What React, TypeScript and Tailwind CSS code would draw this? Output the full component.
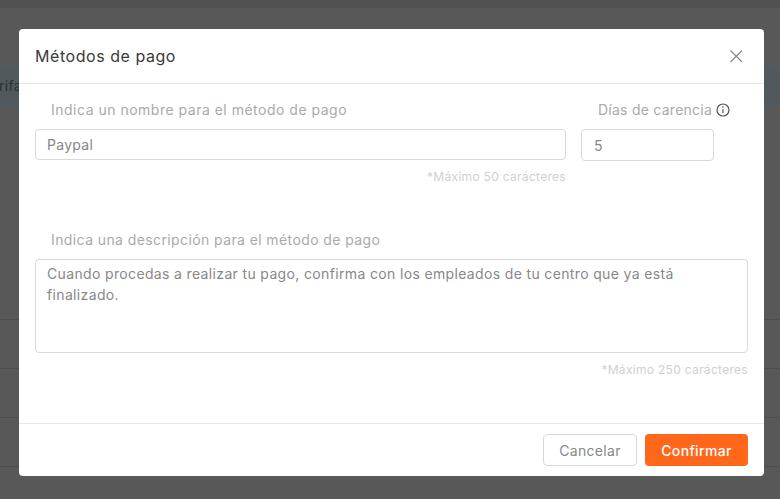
export default function App() {
  const font = { fontFamily: "Inter, 'Noto Sans', sans-serif" };
  return (
    <div className="relative h-[499px] w-[780px] overflow-hidden bg-[#585858]" style={font}>
      <div className="h-[8px] bg-[#515151]" />
      <div className="h-[58px]" />
      <div className="flex h-[39px] items-center border-y border-[#46606f] bg-[#52595d] text-[14px] tracking-[0.3px] text-[#2b3236]">
        <span className="-ml-[1px]">rifa</span>
      </div>
      <div className="h-[214px]" />
      <div className="h-[49px] border-t border-[#4e4e4e]" />
      <div className="h-[49px] border-t border-[#4e4e4e]" />
      <div className="h-[49px] border-t border-[#4e4e4e]" />
      <div className="h-[33px] border-t border-[#4e4e4e]" />
      <div className="absolute top-[29px] left-[19px] flex h-[447px] w-[745px] flex-col rounded-[4px] bg-white">
        <div className="flex h-[55px] items-center justify-between border-b border-[#e6e6e6] pr-[20px] pl-[16px]">
          <h2 className="text-[16px] font-normal tracking-[0.55px] text-[#3a3a3a]">Métodos de pago</h2>
          <svg width="16" height="16" viewBox="0 0 16 16" fill="none" stroke="#888" strokeWidth="1.2">
            <path d="M2.5 2.5 L14 14 M14 2.5 L2.5 14" />
          </svg>
        </div>
        <div className="flex flex-1 flex-col px-[16px]">
          <div className="flex gap-[15px]">
            <div className="w-[531px]">
              <label className="block pt-[17px] pl-[16px] text-[14px] leading-[18px] tracking-[0.5px] text-[#aaa]">Indica un nombre para el método de pago</label>
              <div className="mt-[10px] flex h-[31px] items-center rounded-[4px] border border-[#d9d9d9] px-[11px] pb-[1px] text-[14px] tracking-[0.3px] text-[#888]">Paypal</div>
              <p className="mt-[9px] text-right text-[12px] leading-[15px] tracking-[0.3px] text-[#d0d0d0]">*Máximo 50 carácteres</p>
            </div>
            <div>
              <label className="flex items-center gap-[4px] pt-[17px] pl-[17px] text-[14px] leading-[18px] tracking-[0.25px] whitespace-nowrap text-[#aaa]">
                Días de carencia
                <svg width="14" height="14" viewBox="0 0 14 14" fill="none" stroke="#555" strokeWidth="1.2">
                  <circle cx="7" cy="7" r="6" />
                  <path d="M7 6.2 V10.2" />
                  <circle cx="7" cy="4.1" r="0.8" fill="#555" stroke="none" />
                </svg>
              </label>
              <div className="mt-[10px] flex h-[32px] w-[133px] items-center rounded-[4px] border border-[#d9d9d9] px-[12px] text-[14px] text-[#888]">5</div>
            </div>
          </div>
          <label className="mt-[47px] block pl-[16px] text-[14px] leading-[18px] tracking-[0.4px] text-[#aaa]">Indica una descripción para el método de pago</label>
          <div className="mt-[10px] h-[94px] rounded-[4px] border border-[#d9d9d9] px-[11px] pt-[3px] text-[14px] leading-[21px] tracking-[0.35px] text-[#888]">
            Cuando procedas a realizar tu pago, confirma con los empleados de tu centro que ya está finalizado.
          </div>
          <p className="mt-[9px] text-right text-[12px] leading-[15px] tracking-[0.3px] text-[#d0d0d0]">*Máximo 250 carácteres</p>
        </div>
        <div className="flex h-[53px] items-center justify-end gap-[8px] border-t border-[#e6e6e6] pr-[16px]">
          <button className="h-[32px] w-[94px] rounded-[4px] border border-[#d9d9d9] bg-white text-[14px] tracking-[0.3px] text-[#888]">Cancelar</button>
          <button className="h-[32px] w-[103px] rounded-[4px] bg-[#ff671b] text-[14px] font-medium tracking-[0.35px] text-white">Confirmar</button>
        </div>
      </div>
    </div>
  );
}
